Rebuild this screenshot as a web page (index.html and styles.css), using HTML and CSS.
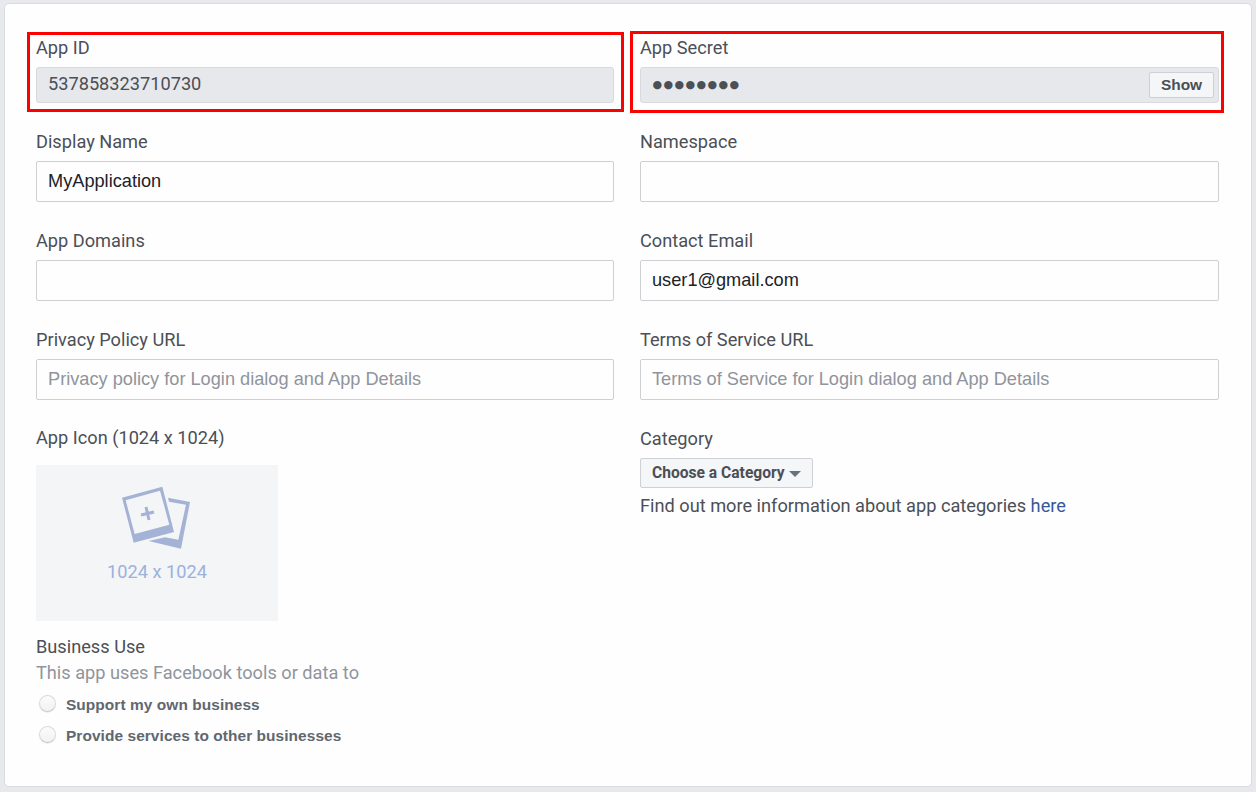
FILE: index.html
```html
<!DOCTYPE html>
<html lang="en">
<head>
<meta charset="utf-8">
<title>App Settings</title>
<link rel="stylesheet" href="styles.css">
</head>
<body>
<main class="card">
  <section class="column">
    <div class="field field-first highlight highlight-id">
      <div class="label">App ID</div>
      <div class="readonly">537858323710730</div>
    </div>
    <div class="field">
      <label class="label" for="name">Display Name</label>
      <input class="input" id="name" value="MyApplication">
    </div>
    <div class="field">
      <label class="label" for="domains">App Domains</label>
      <input class="input" id="domains">
    </div>
    <div class="field">
      <label class="label" for="privacy">Privacy Policy URL</label>
      <input class="input" id="privacy" placeholder="Privacy policy for Login dialog and App Details">
    </div>
    <div class="icon-field">
      <div class="label">App Icon (1024 x 1024)</div>
      <div class="upload">
        <svg class="upload-icon" width="72" height="65" viewBox="60 45 216 195">
          <path fill="#a4b2d5" fill-rule="evenodd" d="M204 83L270 96L243 236L146 213L195 202L235 209L258 104L207 95Z"/>
          <path fill="#a4b2d5" fill-rule="evenodd" d="M66 83L187 50L222 186L101 218ZM77 91L104 192L208 164L180 62Z"/>
          <path fill="none" stroke="#a4b2d5" stroke-width="9" d="M123 135L162 126M138 111L147 150"/>
        </svg>
        <span>1024 x 1024</span>
      </div>
    </div>
    <div class="label">Business Use</div>
    <div class="hint">This app uses Facebook tools or data to</div>
    <label class="choice"><input class="radio" type="radio" name="use">Support my own business</label>
    <label class="choice"><input class="radio" type="radio" name="use">Provide services to other businesses</label>
  </section>
  <section class="column">
    <div class="field field-first highlight highlight-secret">
      <div class="label">App Secret</div>
      <div class="readonly"><span class="secret">●●●●●●●●</span><button class="show">Show</button></div>
    </div>
    <div class="field">
      <label class="label" for="namespace">Namespace</label>
      <input class="input" id="namespace">
    </div>
    <div class="field">
      <label class="label" for="email">Contact Email</label>
      <input class="input" id="email" value="user1@gmail.com">
    </div>
    <div class="field">
      <label class="label" for="terms">Terms of Service URL</label>
      <input class="input" id="terms" placeholder="Terms of Service for Login dialog and App Details">
    </div>
    <div class="label category-label">Category</div>
    <button class="category">Choose a Category<span class="caret"></span></button>
    <div class="info">Find out more information about app categories <a class="link" href="#">here</a></div>
  </section>
</main>
</body>
</html>
```
FILE: styles.css
```css
* {
  box-sizing: border-box;
}

body {
  margin: 0;
  height: 792px;
  padding: 3px 4px 5px;
  overflow: hidden;
  background: #e8e9ed;
  font-family: Roboto, "Liberation Sans", sans-serif;
  font-size: 18.2px;
  line-height: 24px;
  color: #4b4f56;
}

.card {
  display: grid;
  grid-template-columns: 578px 579px;
  column-gap: 26px;
  height: 784px;
  padding: 32px 31px 0;
  border: 1px solid #d9dbe0;
  border-radius: 5px;
  background: #fefefe;
}

.field {
  margin-bottom: 27px;
}

.field-first {
  position: relative;
}

.label {
  display: block;
  height: 24px;
  margin-bottom: 7px;
}

.readonly {
  display: flex;
  align-items: center;
  justify-content: space-between;
  height: 36px;
  padding: 0 4px 2px 11px;
  border: 1px solid #d8dae0;
  border-radius: 3px;
  background: #e7e8ec;
}

.highlight::after {
  content: "";
  position: absolute;
  border: 3px solid #fd0000;
}

.highlight-id::after {
  inset: -4px -10px -9px -9px;
}

.highlight-secret::after {
  inset: -5px -5px -10px -10px;
}

.secret {
  padding: 2px 0 0 0.5px;
  font-family: "DejaVu Sans", sans-serif;
  font-size: 11px;
  letter-spacing: 1.4px;
}

.show {
  height: 26px;
  width: 65px;
  margin-top: 1px;
  padding: 0;
  border: 1px solid #ced0d4;
  border-radius: 2px;
  background: #f5f6f7;
  font: bold 15.45px "Liberation Sans", sans-serif;
  color: #4b4f56;
}

.input {
  display: block;
  width: 100%;
  height: 41px;
  padding: 0 11px 1px;
  border: 1px solid #ced0d4;
  border-radius: 2px;
  background: #fefefe;
  font: 18.2px "Liberation Sans", sans-serif;
  color: #1d2129;
}

.input::placeholder {
  color: #90949c;
}

.icon-field {
  margin: -1px 0 14px;
}

.icon-field .label {
  margin-bottom: 15px;
}

.upload {
  display: flex;
  flex-direction: column;
  align-items: center;
  width: 242px;
  height: 156px;
  padding-top: 20px;
  background: #f3f5f7;
  color: #9cb1dc;
}

.upload-icon {
  margin: 0 2px 10px 0;
}

.column > .label {
  margin-bottom: 2px;
}

.hint {
  margin-bottom: 8px;
  color: #90949c;
}

.choice {
  display: flex;
  align-items: center;
  height: 24px;
  margin-bottom: 7px;
  padding-left: 3px;
  font: bold 15.45px "Liberation Sans", sans-serif;
  letter-spacing: 0.07px;
  color: #606770;
}

.radio {
  appearance: none;
  width: 17px;
  height: 17px;
  margin: 0 10px 3px 0;
  border: 1px solid #dadbde;
  border-bottom-color: #c6c8cc;
  border-radius: 50%;
  background: linear-gradient(#fbfbfc, #f1f2f4);
  box-shadow: 0 0.5px 1px rgba(0, 0, 0, 0.15);
}

.column > .category-label {
  margin-bottom: 7px;
}

.category {
  display: flex;
  align-items: center;
  width: 173px;
  height: 30px;
  padding: 0 10px 0 11px;
  border: 1px solid #ced0d4;
  border-radius: 2px;
  background: #f5f6f7;
  font: bold 15.6px Roboto, sans-serif;
  color: #4b4f56;
  white-space: nowrap;
}

.caret {
  margin: 1px 0 0 4.5px;
  border: 6px solid transparent;
  border-top-color: #6a7180;
  border-bottom: 0;
}

.info {
  margin-top: 6px;
}

.link {
  color: #365899;
  text-decoration: none;
}
```
